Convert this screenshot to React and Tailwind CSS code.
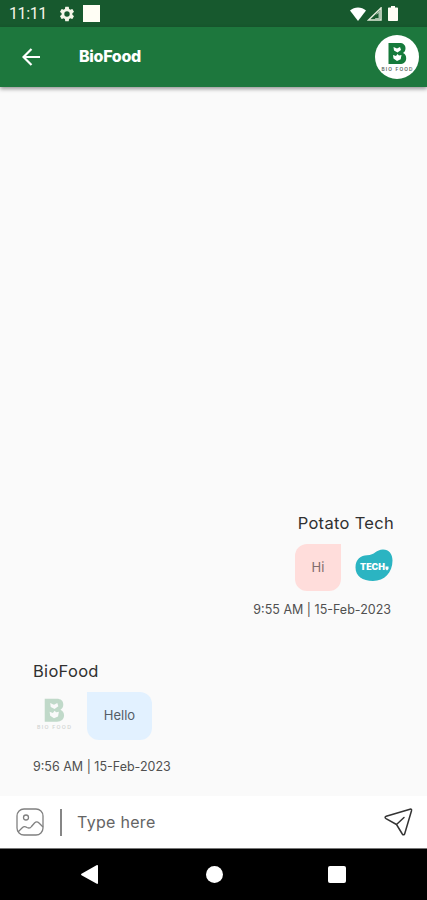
import React, { useState } from 'react';

const messages = [
  { id: 1, sender: 'Potato Tech', text: 'Hi', time: '9:55 AM', date: '15-Feb-2023', mine: true },
  { id: 2, sender: 'BioFood', text: 'Hello', time: '9:56 AM', date: '15-Feb-2023', mine: false },
];

function BioFoodLogo({ className }) {
  return (
    <svg viewBox="0 0 44 44" className={className}>
      <path
        fillRule="evenodd"
        fill="#167a3b"
        d="M13.500 8h11c3.800 0 6 2 6 5.200 0 2.300-1 3.900-2.600 4.800 2.200.9 3.300 2.700 3.300 5.200 0 3.600-2.500 5.800-6.500 5.800H13.500zM18.500 12l.5 3.500 3.500 2 3.500-2.500-1-3-3 1.500zM18 20l.5 3.500 3.500 2.500 3.700-1.800.8-4.200-2.500.5-1.500-1.500-1.500 2z"
      />
      <text x="22" y="36" textAnchor="middle" fontSize="4.800" fontWeight="600" textLength="31" fill="#58645c" fontFamily="Inter, sans-serif">
        BIO FOOD
      </text>
    </svg>
  );
}

function TechLogo() {
  return (
    <svg viewBox="0 0 38 34" className="h-[34px] w-[38px]">
      <path fill="#2bb4c2" d="M.5 18.500C.5 10 6 6.200 12 6.200c8 0 9-5.700 16-5.700 6 0 9.500 4.500 9.500 11 0 12-8 20.500-19.500 20.500C7.500 32 .5 27 .5 18.500z" />
      <text x="5" y="21" fontSize="8.500" fontWeight="900" textLength="25" lengthAdjust="spacingAndGlyphs" fill="#fff" fontFamily="Inter, sans-serif">
        TECH
      </text>
      <path fill="#fff" d="M30.500 17.500H33.500v2.500l-1.500 1.500-1.500-1.500z" />
    </svg>
  );
}

function StatusBar() {
  return (
    <div className="flex h-[27px] shrink-0 items-center bg-[#17592e] text-[#f4f5e8]">
      <span className="ml-[9px] w-[38px] whitespace-nowrap font-['Roboto',sans-serif] text-base leading-none tracking-[-0.4px]">11:11</span>
      <svg viewBox="0 0 24 24" className="ml-[11px] h-[18px] w-[18px]" fill="currentColor">
        <path d="M19.140 12.940c.04-.3.06-.61.06-.94s-.02-.64-.07-.94l2.030-1.580a.49.49 0 0 0 .12-.61l-1.920-3.320a.49.49 0 0 0-.59-.22l-2.390.96a7 7 0 0 0-1.620-.94l-.36-2.540A.48.48 0 0 0 13.920 2.400h-3.840a.48.48 0 0 0-.48.41l-.36 2.540a7 7 0 0 0-1.620.94l-2.390-.96a.48.48 0 0 0-.59.22L2.720 8.870a.48.48 0 0 0 .12.61l2.030 1.580c-.05.3-.09.63-.09.94s.02.64.07.94l-2.030 1.580a.49.49 0 0 0-.12.61l1.920 3.320c.12.22.37.29.59.22l2.390-.96c.5.38 1.030.7 1.620.94l.36 2.540c.05.24.24.41.48.41h3.840c.24 0 .44-.17.47-.41l.36-2.540a7 7 0 0 0 1.620-.94l2.390.96c.22.08.47 0 .59-.22l1.920-3.320a.48.48 0 0 0-.12-.61zM12 15.600a3.600 3.600 0 1 1 0-7.200 3.600 3.600 0 0 1 0 7.200z" />
      </svg>
      <div className="ml-[7px] h-[17px] w-[17px] bg-[#fffef5]" />
      <div className="ml-auto mr-[29px] flex items-center">
        <svg viewBox="0 0 16 14" className="h-[14px] w-[16px]" fill="#fff">
          <path d="M0 3.500C4.500-.4 11.500-.4 16 3.500L8 14z" />
        </svg>
        <svg viewBox="0 0 15 14" className="ml-px h-[14px] w-[15px]">
          <path d="M14 1v12H1.500z" fill="none" stroke="#e4ecdc" strokeWidth="1.500" />
          <path d="M10 6l3-3v9H8z" fill="#a9c1ac" />
          <path d="M8 9l3.500-3v5H8z" fill="#17592e" />
        </svg>
        <svg viewBox="0 0 10 15" className="ml-[6px] h-[15px] w-[10px]" fill="#fffef5">
          <path d="M3 0h4v1.500h2c.6 0 1 .4 1 1V14c0 .6-.4 1-1 1H1c-.6 0-1-.4-1-1V2.500c0-.6.4-1 1-1h2z" />
        </svg>
      </div>
    </div>
  );
}

function Header() {
  return (
    <header className="z-10 flex h-[60px] shrink-0 items-center bg-[#1d773d] pr-2 shadow-[0_2px_4px_rgba(0,0,0,0.4)]">
      <button className="ml-[22px] h-[18px] w-[19px]">
        <svg viewBox="0 0 19 18" className="h-[18px] w-[19px]" fill="none" stroke="#fff" strokeWidth="2.200">
          <path d="M18 9H1.500M9.500 1L1.500 9l8 8" />
        </svg>
      </button>
      <h1 className="-mt-0.5 ml-[38px] text-base font-extrabold leading-none tracking-[-0.3px] text-white">BioFood</h1>
      <div className="ml-auto h-11 w-11 overflow-hidden rounded-full bg-white">
        <BioFoodLogo className="h-11 w-11" />
      </div>
    </header>
  );
}

function Message({ message }) {
  const stamp = (
    <p className="whitespace-nowrap text-[12.500px] leading-4 text-[#505050]">
      {message.time} | {message.date}
    </p>
  );

  if (message.mine) {
    return (
      <div className="flex flex-col items-end pr-[33px]">
        <p className="text-[16.500px] leading-5 tracking-[0.3px] text-[#303030]">{message.sender}</p>
        <div className="mt-[11px] flex items-center gap-[14px] pr-px">
          <div className="flex h-[47px] w-[46px] items-center justify-center rounded-[12px] rounded-tr-none bg-[#ffdddb] text-[13px] text-[#806c6b]">
            {message.text}
          </div>
          <div className="-mt-[3px]">
            <TechLogo />
          </div>
        </div>
        <div className="mt-[11px] pr-[3px]">{stamp}</div>
      </div>
    );
  }

  return (
    <div className="flex flex-col items-start pl-[33px]">
      <p className="text-[16.500px] leading-5 tracking-[0.3px] text-[#303030]">{message.sender}</p>
      <div className="mt-[11px] flex items-center">
        <BioFoodLogo className="-ml-[3px] -mt-1 h-[48px] w-[48px] opacity-25" />
        <div className="ml-[9px] flex h-[48px] w-[65px] items-center justify-center rounded-[12px] rounded-tl-none bg-[#e2f1ff] text-[13px] text-[#535d66]">
          {message.text}
        </div>
      </div>
      <div className="mt-[19px]">{stamp}</div>
    </div>
  );
}

function InputBar() {
  const [draft, setDraft] = useState('');

  return (
    <div className="flex h-[53px] shrink-0 items-center border-b border-[#777] bg-white">
      <svg viewBox="0 0 28 28" className="ml-4 h-7 w-7 shrink-0" fill="none" stroke="#808080" strokeWidth="1.300">
        <rect x="1" y="1" width="26" height="26" rx="7" />
        <circle cx="10" cy="9.500" r="2.500" />
        <path d="M2 24l4.500-4.500c1.500-1.500 3-1 4.500 0 2 1 3.500.5 4.500-1l3-3.500c1.500-1.500 3-1.500 4.500 0L27 19" />
      </svg>
      <div className="ml-4 h-[27px] w-[2px] shrink-0 bg-[#868686]" />
      <input
        type="text"
        value={draft}
        onChange={(e) => setDraft(e.target.value)}
        placeholder="Type here"
        className="ml-[15px] min-w-0 flex-1 text-base tracking-[0.3px] outline-none placeholder:text-[#646464]"
      />
      <button className="mr-[14px] h-7 w-[29px] shrink-0">
        <svg viewBox="0 0 29 28" className="h-7 w-[29px]" fill="none" stroke="#333" strokeWidth="1.500" strokeLinejoin="round" strokeLinecap="round">
          <path d="M2.200 8.300L26 1.200c1.200-.3 1.800.3 1.500 1.500l-6.800 23c-.4 1.400-1.600 1.500-2.400.3L12.500 16.500 2 10.700c-1.300-.8-1.200-2 .2-2.400zM12.500 16.500L20 9.500" />
        </svg>
      </button>
    </div>
  );
}

function NavBar() {
  return (
    <div className="flex h-[51px] shrink-0 items-center bg-black">
      <svg viewBox="0 0 17 19" className="ml-[81px] h-[19px] w-[17px]" fill="#fff">
        <path d="M16 0c.6 0 1 .3 1 1v17c0 .8-.6 1.200-1.200.8L.5 10.200c-.6-.4-.6-1 0-1.400L15.500.2z" />
      </svg>
      <div className="ml-[108px] h-[17px] w-[17px] rounded-full bg-white" />
      <div className="ml-[105px] h-[17px] w-[18px] rounded-[2px] bg-white" />
    </div>
  );
}

function App() {
  return (
    <div className="flex h-[900px] w-[427px] flex-col overflow-hidden bg-[#fafafa] font-['Inter','Liberation_Sans',sans-serif]">
      <StatusBar />
      <Header />
      <main className="flex min-h-0 flex-1 flex-col justify-end gap-[43px] pb-[21px]">
        {messages.map((message) => (
          <Message key={message.id} message={message} />
        ))}
      </main>
      <InputBar />
      <NavBar />
    </div>
  );
}

export default App;
